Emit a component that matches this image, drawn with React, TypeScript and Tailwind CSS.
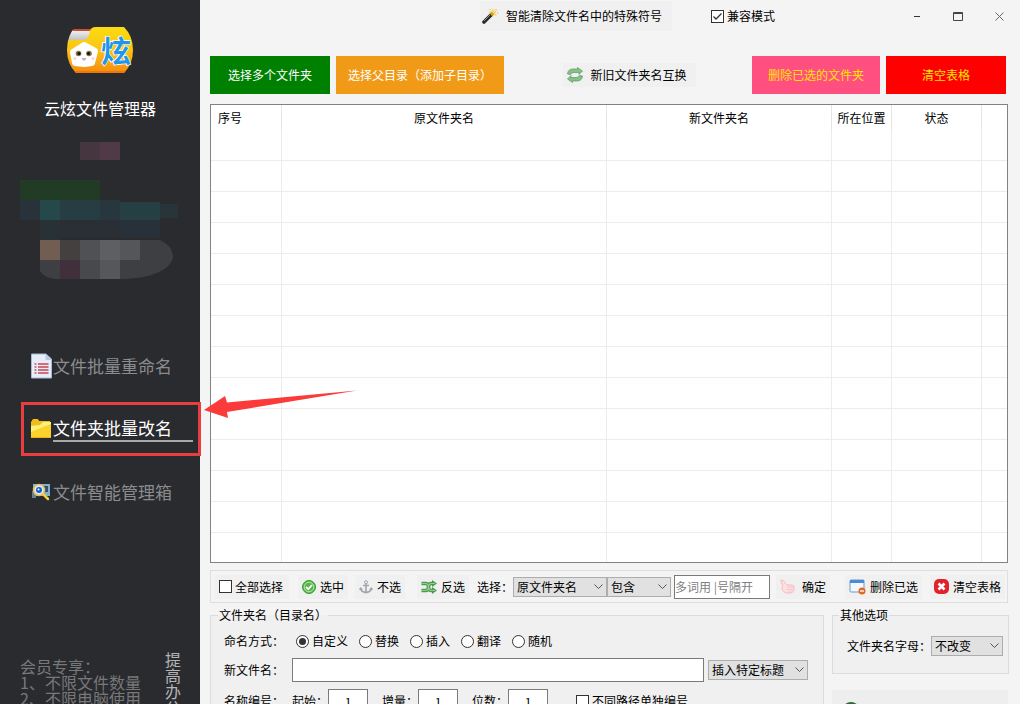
import React from "react";

const cx = (...parts: string[]) => parts.join(" ");

function Logo() {
  return (
    <svg width="68" height="50" viewBox="0 0 68 50" aria-hidden="true">
      <defs>
        <linearGradient id="folder" x1="0" y1="0" x2="0" y2="1">
          <stop offset="0" stopColor="#fbdc10" />
          <stop offset="0.5" stopColor="#fcc414" />
          <stop offset="1" stopColor="#f78a10" />
        </linearGradient>
        <linearGradient id="paper" x1="0" y1="0" x2="0" y2="1">
          <stop offset="0" stopColor="#f4f4f4" />
          <stop offset="1" stopColor="#bdbdbd" />
        </linearGradient>
        <clipPath id="logoShape">
          <path d="M9 2H58Q67 11 67 25T58 48H10Q1 39 1 25T9 2Z" />
        </clipPath>
      </defs>
      <g clipPath="url(#logoShape)">
        <path d="M0 5H24V16H0Z" fill="url(#paper)" />
        <path d="M5 4H25V6H4Z" fill="#c8502e" />
        <path d="M0 2H26L24 4H0Z" fill="#2a2b2f" />
        <path d="M0 15H18Q22 15 24 6Q25 2 30 2H68V48H0Z" fill="url(#folder)" />
        <path d="M0 46H68V48H0Z" fill="#f07608" />
      </g>
      <path
        d="M18 20L29 26L26 38L18 39L9 38L7 27Z"
        fill="#fff"
        stroke="#fff"
        strokeWidth="6"
        strokeLinejoin="round"
      />
      <circle cx="12.500" cy="28.500" r="2.800" fill="#8a7440" />
      <circle cx="23" cy="28.500" r="2.800" fill="#8a7440" />
      <circle cx="13" cy="28.500" r="1.600" fill="#151515" />
      <circle cx="22.500" cy="28.500" r="1.600" fill="#151515" />
      <path d="M15.500 33H20.500L19 35.500H17Z" fill="#c9a8c0" />
      <circle cx="9" cy="33.500" r="1.500" fill="#fbd3d8" />
      <circle cx="27" cy="33.500" r="1.500" fill="#fbd3d8" />
      <text
        x="35"
        y="37"
        fontSize="30"
        fontWeight="700"
        fontFamily="'Noto Sans CJK SC', sans-serif"
        fill="#1e96ea"
        stroke="#fff"
        strokeWidth="1.500"
        paintOrder="stroke"
      >
        炫
      </text>
    </svg>
  );
}

const tiles: [number, number, number, number, string][] = [
  [80, 2, 20, 18, "#46363f"],
  [100, 2, 20, 18, "#503a48"],
  [20, 40, 80, 20, "#213b25"],
  [20, 60, 20, 20, "#28323a"],
  [40, 60, 20, 20, "#25484a"],
  [60, 60, 40, 20, "#263d43"],
  [100, 60, 20, 20, "#27373d"],
  [120, 62, 40, 18, "#263f43"],
  [160, 64, 18, 14, "#29343a"],
  [40, 80, 20, 20, "#283236"],
  [60, 80, 60, 18, "#292f34"],
  [120, 80, 40, 18, "#28303a"],
];

function BlurredProfile() {
  return (
    <svg width="200" height="150" viewBox="0 0 200 150" aria-hidden="true">
      {tiles.map(([x, y, w, h, c], i) => (
        <rect key={i} x={x} y={y} width={w} height={h} fill={c} />
      ))}
      <clipPath id="pill">
        <path d="M40 100H160Q173 106 173 117C171 130 150 139 120 139H56Q44 138 40 131Z" />
      </clipPath>
      <g clipPath="url(#pill)">
        <rect x="40" y="100" width="134" height="40" fill="#3e3f42" />
        <rect x="40" y="100" width="20" height="20" fill="#715d52" />
        <rect x="60" y="100" width="20" height="20" fill="#454040" />
        <rect x="80" y="100" width="20" height="40" fill="#505155" />
        <rect x="100" y="100" width="20" height="40" fill="#5e5f62" />
        <rect x="120" y="100" width="20" height="20" fill="#55565a" />
        <rect x="60" y="120" width="20" height="20" fill="#41303c" />
        <rect x="80" y="120" width="20" height="20" fill="#48494c" />
        <rect x="100" y="120" width="20" height="20" fill="#56575a" />
      </g>
    </svg>
  );
}

const DocIcon = () => (
  <svg width="22" height="26" viewBox="0 0 22 26" aria-hidden="true">
    <path d="M0.500 1H15L20.500 6V25H0.500Z" fill="#e6edf8" stroke="#a9b9d4" />
    <path d="M14.500 1V7H20.500Z" fill="#b9c9e2" />
    <path d="M3.500 11H5.500M3.500 14H5.500M3.500 17H5.500M3.500 20H5.500" stroke="#c95560" strokeWidth="1.600" />
    <path d="M7 11H17.500M7 14H17.500M7 17H17.500M7 20H17.500" stroke="#cc4450" strokeWidth="1.600" />
  </svg>
);

const FolderIcon = () => (
  <svg width="22" height="22" viewBox="0 0 22 22" aria-hidden="true">
    <path d="M0 4L2 1H7L8 3H19V20H0Z" fill="#f0bd1c" />
    <path d="M0 8L9 7L12 4H20V20H0Z" fill="#fbd22c" />
    <path d="M0 8L9 7L12 4H20V6L12 9L0 14Z" fill="#fff07a" />
    <path d="M0 19H20V20H0Z" fill="#f0b50c" />
  </svg>
);

const SearchPicIcon = () => (
  <svg width="20" height="18" viewBox="0 0 20 18" aria-hidden="true">
    <rect x="2" y="1" width="17" height="12" fill="#7fb0cf" />
    <path d="M12 3H17V9H14Z" fill="#31536b" />
    <path d="M1 8H5V15H1Z" fill="#6c7f8e" />
    <circle cx="8" cy="7" r="5.500" fill="#d8ecfb" stroke="#e9bb58" strokeWidth="1.500" />
    <circle cx="8" cy="7" r="3" fill="#175fc0" />
    <circle cx="7.500" cy="6.500" r="1" fill="#fff" />
    <path d="M12 11L17 16" stroke="#f3cd3c" strokeWidth="2.500" strokeLinecap="round" />
  </svg>
);

const WandIcon = () => (
  <svg width="16" height="16" viewBox="0 0 16 16" aria-hidden="true">
    <path d="M11 0L12 3L15 2L13.500 5L15 8L12 7L9 9L9 6L6 4L9.500 3Z" fill="#f5d976" />
    <path d="M2 14L9 7" stroke="#26282b" strokeWidth="3.600" strokeLinecap="round" />
    <path d="M2 13L8 7" stroke="#8a8d92" strokeWidth="1" />
    <path d="M9 7L11 5" stroke="#d2a026" strokeWidth="3.400" />
    <path d="M14 1V2M15 5H16M8 1V2" stroke="#e0b23a" />
  </svg>
);

const SwapIcon = () => (
  <svg width="16" height="16" viewBox="0 0 16 16" aria-hidden="true">
    <g fill="#86bf88" stroke="#5a9a62" strokeWidth="0.700" strokeLinejoin="round">
      <path d="M0.500 7Q1 2 6 2H10.500V0.500L15.500 4L12 7.500V5.500H7Q4 5.500 3.500 7.500Z" />
      <path d="M15.500 9Q15 14 10 14H5.500V15.500L0.500 12L4 8.500V10.500H9Q12 10.500 12.500 8.500Z" />
    </g>
  </svg>
);

const CheckIcon = () => (
  <svg width="14" height="14" viewBox="0 0 14 14" aria-hidden="true">
    <circle cx="7" cy="7" r="6.500" fill="#55b947" stroke="#3b9a38" />
    <circle cx="7" cy="7" r="4.800" fill="none" stroke="#b9e5ae" />
    <path d="M4 7L6.300 9.200L10 5" fill="none" stroke="#fff" strokeWidth="1.800" />
  </svg>
);

const AnchorIcon = () => (
  <svg width="14" height="14" viewBox="0 0 14 14" fill="none" stroke="#a1a6ab" aria-hidden="true">
    <circle cx="7" cy="2.200" r="1.500" />
    <path d="M7 4V13M4 5.500H10" strokeWidth="1.600" />
    <path d="M1.500 8Q2 12 7 12.500Q12 12 12.500 8" strokeWidth="1.800" />
    <path d="M0 10L1.500 7L4 9.500ZM14 10L12.500 7L10 9.500Z" fill="#a1a6ab" stroke="none" />
  </svg>
);

const ShuffleIcon = () => (
  <svg width="16" height="14" viewBox="0 0 16 14" aria-hidden="true">
    <g fill="none" stroke="#4c9a50" strokeWidth="3.400">
      <path d="M0.500 3.500H5Q7 3.500 7.500 7T10 10.500H12" />
      <path d="M0.500 10.500H5Q7 10.500 7.500 7T10 3.500H12" />
    </g>
    <path d="M11 0L16 3.500L11 7ZM11 7L16 10.500L11 14Z" fill="#4c9a50" />
    <path
      d="M1 3.500H5Q7 3.500 7.500 7T10 10.500H14M1 10.500H5Q7 10.500 7.500 7T10 3.500H14"
      fill="none"
      stroke="#93cf8c"
      strokeWidth="1.200"
    />
  </svg>
);

const HandIcon = () => (
  <svg width="15" height="15" viewBox="0 0 15 15" aria-hidden="true">
    <path
      d="M1 1Q3 0 5 4L7 6H12Q14 6 14 8V11Q13 14 10 14H6Q3 13 2 10Q1 8 3 7L1 3Z"
      fill="#fce0e2"
      stroke="#f6bcc1"
    />
    <path d="M7 8H13M7 10.500H13M8 13H12" stroke="#f6bcc1" strokeWidth="0.800" />
  </svg>
);

const WindowMinusIcon = () => (
  <svg width="17" height="16" viewBox="0 0 17 16" aria-hidden="true">
    <rect x="1" y="1" width="14" height="12" rx="1" fill="#f3f8fd" stroke="#6d97ca" />
    <path d="M1 1H15V4H1Z" fill="#4d8bd6" />
    <circle cx="13" cy="12" r="3.500" fill="#e06a25" />
    <path d="M11 12H15" stroke="#fff" strokeWidth="1.300" />
  </svg>
);

const CloseBadgeIcon = () => (
  <svg width="15" height="15" viewBox="0 0 15 15" aria-hidden="true">
    <rect width="15" height="15" rx="5" fill="#e2222a" />
    <path d="M4.500 4.500L10.500 10.500M10.500 4.500L4.500 10.500" stroke="#fff" strokeWidth="2.600" />
  </svg>
);

function NavItem({
  icon,
  text,
  active = false,
}: {
  icon: React.ReactNode;
  text: string;
  active?: boolean;
}) {
  return (
    <button
      className={cx(
        "relative flex h-[54px] w-full items-center pl-[31px] text-left text-[17px]",
        active ? "text-white" : "text-[#8b8c8e]"
      )}
    >
      <span className="w-[22px]">{icon}</span>
      <span
        className={cx(
          "mr-[7px] flex-1 leading-[24px]",
          active ? "border-b-2 border-[#a8a8a8]" : ""
        )}
      >
        {text}
      </span>
      {active && (
        <>
          <span className="absolute inset-y-0 -right-px left-[21px] border-[3px] border-[#e83e40]" />
          <svg
            className="absolute -top-3 left-[204px] z-10"
            width="154"
            height="30"
            viewBox="0 0 154 30"
            aria-hidden="true"
          >
            <path d="M0 20L21 6L23 12.500L153 0.500L23 22L24 28Z" fill="#fb3a3a" />
          </svg>
        </>
      )}
    </button>
  );
}

function ToolButton({
  icon,
  text,
  className = "",
}: {
  icon: React.ReactNode;
  text: string;
  className?: string;
}) {
  return (
    <button
      className={cx("flex h-6 shrink-0 items-center gap-1 bg-[#f0f0f0] px-1 whitespace-nowrap", className)}
    >
      {icon}
      {text}
    </button>
  );
}

function Select({ label, options, width }: { label: string; options: string[]; width: string }) {
  return (
    <span className={cx("relative shrink-0", width)}>
      <select
        aria-label={label}
        className="block h-5 w-full appearance-none border border-[#adadad] bg-[#e1e1e1] px-[3px] leading-[18px]"
      >
        {options.map((o) => (
          <option key={o}>{o}</option>
        ))}
      </select>
      <svg
        className="pointer-events-none absolute top-[7px] right-1"
        width="9"
        height="6"
        viewBox="0 0 9 6"
        fill="none"
        stroke="#555"
        aria-hidden="true"
      >
        <path d="M0.500 0.500L4.500 4.500L8.500 0.500" />
      </svg>
    </span>
  );
}

function Check({ text, checked = false }: { text: string; checked?: boolean }) {
  return (
    <label className="flex shrink-0 items-center gap-[3px] whitespace-nowrap">
      <span className="relative flex">
        <input
          type="checkbox"
          defaultChecked={checked}
          className="peer size-[13px] appearance-none border border-[#333] bg-white"
        />
        <svg
          className="pointer-events-none absolute inset-0 hidden peer-checked:block"
          width="13"
          height="13"
          viewBox="0 0 13 13"
          fill="none"
          stroke="#333"
          strokeWidth="1.300"
          aria-hidden="true"
        >
          <path d="M2.500 6.500L5 9L10.500 3.500" />
        </svg>
      </span>
      {text}
    </label>
  );
}

function Radio({ text, checked = false }: { text: string; checked?: boolean }) {
  return (
    <label className="flex items-center gap-[3px] whitespace-nowrap">
      <span className="relative flex">
        <input
          type="radio"
          name="mode"
          defaultChecked={checked}
          className="peer size-[13px] appearance-none rounded-full border border-[#333] bg-white"
        />
        <span className="pointer-events-none absolute inset-[3px] hidden rounded-full bg-[#333] peer-checked:block" />
      </span>
      {text}
    </label>
  );
}

function NumberField({ text }: { text: string }) {
  return (
    <label className="flex items-center">
      <span className="w-9">{text}</span>
      <input defaultValue="1" className="h-6 w-10 border border-[#7a7a7a] bg-white text-center" />
    </label>
  );
}

const rows = Array.from({ length: 14 }, (_, i) => i);
const cols = [0, 1, 2, 3, 4, 5];
const headers = ["序号", "原文件夹名", "新文件夹名", "所在位置", "状态", ""];

export default function App() {
  return (
    <div className="flex h-screen overflow-hidden bg-[#f4f4f4] font-['Noto_Sans_CJK_SC','Liberation_Sans',sans-serif] text-[12px] leading-4 text-black">
      <aside className="flex w-[200px] shrink-0 flex-col bg-[#2a2b2f]">
        <div className="flex shrink-0 flex-col items-center pt-[25px]">
          <Logo />
          <h1 className="mt-[21px] text-[16px] leading-6 text-white">云炫文件管理器</h1>
        </div>
        <div className="mt-5 shrink-0">
          <BlurredProfile />
        </div>
        <nav className="mt-[49px] flex shrink-0 flex-col gap-[9px]">
          <NavItem icon={<DocIcon />} text="文件批量重命名" />
          <NavItem icon={<FolderIcon />} text="文件夹批量改名" active />
          <NavItem icon={<SearchPicIcon />} text="文件智能管理箱" />
        </nav>
        <div className="mt-[132px] flex shrink-0 justify-between pr-[19px] pl-5 text-[16px] leading-4">
          <div className="pt-[7px] whitespace-nowrap text-[#77787a]">
            <p>会员专享：</p>
            <p>1、不限文件数量</p>
            <p>2、不限电脑使用</p>
          </div>
          <p className="w-4 break-all text-[#b4b5b7]">提高办公</p>
        </div>
      </aside>

      <main className="flex min-w-0 flex-1 flex-col">
        <header className="flex h-8 shrink-0 items-center pr-[15px] pl-[280px]">
          <button className="flex h-[30px] items-center gap-2 bg-[#f0f0f0] pr-[10px] pl-[2px] whitespace-nowrap">
            <WandIcon />
            智能清除文件名中的特殊符号
          </button>
          <div className="ml-[39px]">
            <Check text="兼容模式" checked />
          </div>
          <div className="ml-auto flex items-center gap-[30px]">
            <button aria-label="最小化">
              <svg width="11" height="11" viewBox="0 0 11 11" stroke="#333" aria-hidden="true">
                <path d="M2 5.500H8" />
              </svg>
            </button>
            <button aria-label="最大化">
              <svg width="11" height="11" viewBox="0 0 11 11" fill="none" stroke="#444" aria-hidden="true">
                <path d="M0.500 1.500H9.500V9.500H0.500ZM0.500 2.500H9.500" />
              </svg>
            </button>
            <button aria-label="关闭">
              <svg width="11" height="11" viewBox="0 0 11 11" stroke="#666" aria-hidden="true">
                <path d="M1.500 1.500L9.500 9.500M9.500 1.500L1.500 9.500" />
              </svg>
            </button>
          </div>
        </header>

        <div className="flex shrink-0 items-center gap-[6px] pt-6 pr-[14px] pl-[10px] whitespace-nowrap">
          <button className="h-[38px] w-[120px] bg-[#008000] text-white">选择多个文件夹</button>
          <button className="h-[38px] w-[168px] bg-[#f09a18] text-white">选择父目录（添加子目录）</button>
          <div className="flex flex-1 justify-center pl-[3px]">
            <button className="flex h-6 items-center gap-[7px] bg-[#f0f0f0] pr-[9px] pl-1">
              <SwapIcon />
              新旧文件夹名互换
            </button>
          </div>
          <button className="h-[38px] w-[128px] bg-[#ff4f81] text-[#ffe500]">删除已选的文件夹</button>
          <button className="h-[38px] w-[120px] bg-[#ff0000] text-[#ffe500]">清空表格</button>
        </div>

        <div className="mt-[10px] mr-3 ml-[10px] shrink-0 border border-[#828282] bg-white">
          <table className="w-full table-fixed border-separate border-spacing-0">
            <colgroup>
              <col className="w-[71px]" />
              <col />
              <col className="w-[225px]" />
              <col className="w-[60px]" />
              <col className="w-[90px]" />
              <col className="w-[25px]" />
            </colgroup>
            <thead>
              <tr className="h-[25px]">
                {headers.map((h, i) => (
                  <th
                    key={i}
                    className="border-[#e5e5e5] p-0 text-center font-normal whitespace-nowrap not-last:border-r first:pl-[7px] first:text-left"
                  >
                    {h}
                  </th>
                ))}
              </tr>
            </thead>
            <tbody>
              {rows.map((r) => (
                <tr key={r} className="group h-[31px] last:h-[29px]">
                  {cols.map((c) => (
                    <td
                      key={c}
                      className="border-b border-[#ececec] p-0 not-last:border-r group-last:border-b-0"
                    />
                  ))}
                </tr>
              ))}
            </tbody>
          </table>
        </div>

        <div className="mt-[7px] mr-3 ml-[10px] flex h-[33px] shrink-0 items-center border border-[#dedede] pr-[2px] pl-1">
          <div className="flex h-6 w-[74px] shrink-0 items-center bg-[#f0f0f0] pl-1">
            <Check text="全部选择" />
          </div>
          <ToolButton icon={<CheckIcon />} text="选中" className="ml-[9px]" />
          <ToolButton icon={<AnchorIcon />} text="不选" className="ml-[7px]" />
          <ToolButton icon={<ShuffleIcon />} text="反选" className="ml-3" />
          <span className="ml-2 w-9 shrink-0">选择：</span>
          <Select label="选择字段" options={["原文件夹名", "新文件夹名"]} width="w-[94px]" />
          <Select label="匹配条件" options={["包含", "不包含"]} width="w-[64px]" />
          <input
            aria-label="关键词"
            placeholder="多词用 |号隔开"
            className="mx-[3px] h-6 min-w-0 flex-1 border border-[#7a7a7a] bg-white placeholder:text-[#808080]"
          />
          <ToolButton icon={<HandIcon />} text="确定" className="ml-[3px] gap-[7px]" />
          <ToolButton icon={<WindowMinusIcon />} text="删除已选" className="ml-[15px]" />
          <ToolButton icon={<CloseBadgeIcon />} text="清空表格" className="ml-2" />
        </div>

        <div className="mt-1 mr-3 ml-[10px] flex shrink-0 items-start gap-2">
          <fieldset className="h-[160px] min-w-0 flex-1 border border-[#dcdcdc] bg-[#f0f0f0] pr-[15px] pl-[13px]">
            <legend className="-ml-[6px] px-px">文件夹名（目录名）</legend>
            <div className="mt-[10px] flex h-4 items-center">
              <span className="w-[72px] shrink-0">命名方式：</span>
              <div className="flex gap-[11px]">
                <Radio text="自定义" checked />
                <Radio text="替换" />
                <Radio text="插入" />
                <Radio text="翻译" />
                <Radio text="随机" />
              </div>
            </div>
            <div className="mt-[9px] flex items-center">
              <label htmlFor="newName" className="w-[68px] shrink-0">
                新文件名：
              </label>
              <input
                id="newName"
                className="mr-1 h-6 min-w-0 flex-1 border border-[#7a7a7a] bg-white px-1"
              />
              <Select label="插入标题" options={["插入特定标题"]} width="w-[100px]" />
            </div>
            <div className="mt-[7px] flex items-center">
              <span className="w-[68px] shrink-0">名称编号：</span>
              <div className="mr-[28px] flex gap-[14px]">
                <NumberField text="起始：" />
                <NumberField text="增量：" />
                <NumberField text="位数：" />
              </div>
              <Check text="不同路径单独编号" />
            </div>
          </fieldset>
          <div className="w-[176px] shrink-0">
            <fieldset className="h-[67px] border border-[#dcdcdc] bg-[#f0f0f0] pr-[5px] pl-[14px]">
              <legend className="-ml-2 px-px">其他选项</legend>
              <div className="mt-[13px] flex items-center justify-between">
                <span className="whitespace-nowrap">文件夹名字母：</span>
                <Select label="文件夹名字母" options={["不改变", "大写", "小写"]} width="w-[72px]" />
              </div>
            </fieldset>
            <button
              aria-label="开始"
              className="mt-4 flex h-12 w-full items-start bg-[#eeeeee] pt-3 pl-[10px]"
            >
              <svg width="18" height="18" viewBox="0 0 18 18" aria-hidden="true">
                <circle cx="9" cy="9" r="8" fill="#4fae4a" stroke="#2c6b2f" strokeWidth="2" />
                <path d="M7 5L13 9L7 13Z" fill="#fff" />
              </svg>
            </button>
          </div>
        </div>
      </main>
    </div>
  );
}
